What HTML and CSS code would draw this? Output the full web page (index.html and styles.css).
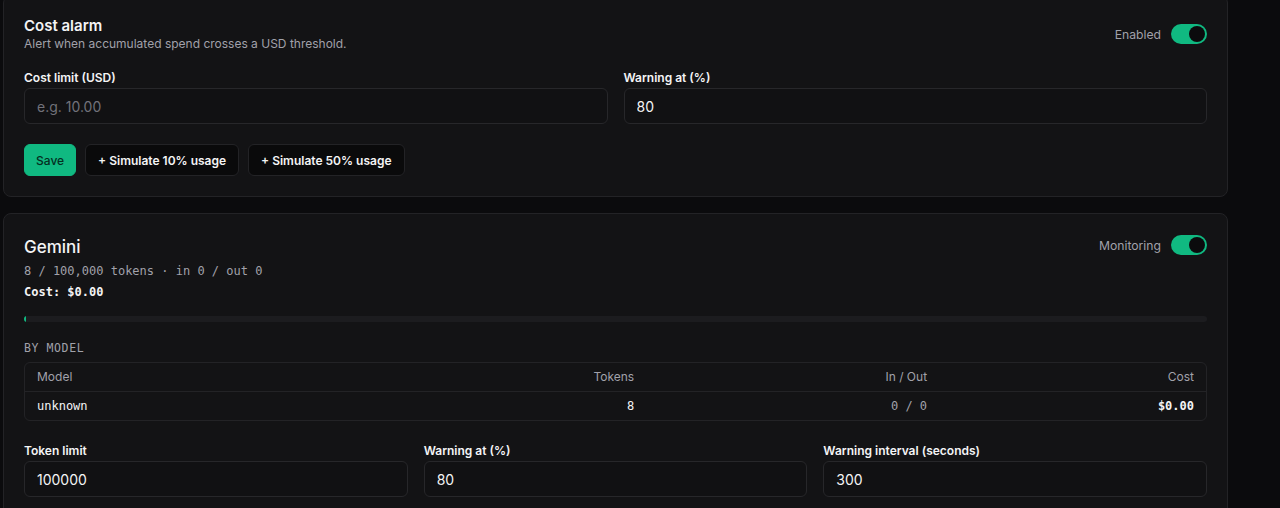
FILE: index.html
```html
<!DOCTYPE html>
<html lang="en">
<head>
    <meta charset="UTF-8">
    <meta name="viewport" content="width=device-width, initial-scale=1.0">
    <title>Usage limits</title>
    <link rel="stylesheet" href="styles.css">
</head>
<body>

    <div class="page">

        <!-- Cost alarm card -->
        <section class="card">
            <div class="card-head">
                <div>
                    <h2 class="card-title">Cost alarm</h2>
                    <p class="card-sub">Alert when accumulated spend crosses a USD threshold.</p>
                </div>
                <label class="switch-wrap">
                    <span>Enabled</span>
                    <span class="switch on"><span class="knob"></span></span>
                </label>
            </div>

            <div class="fields two">
                <div class="field">
                    <label>Cost limit (USD)</label>
                    <input type="text" placeholder="e.g. 10.00">
                </div>
                <div class="field">
                    <label>Warning at (%)</label>
                    <input type="text" value="80">
                </div>
            </div>

            <div class="actions">
                <button class="btn primary">Save</button>
                <button class="btn">+ Simulate 10% usage</button>
                <button class="btn">+ Simulate 50% usage</button>
            </div>
        </section>

        <!-- Provider card -->
        <section class="card">
            <div class="card-head top">
                <div>
                    <h2 class="provider">Gemini</h2>
                    <div class="mono muted">8 / 100,000 tokens · in 0 / out 0</div>
                    <div class="mono strong">Cost: <b>$0.00</b></div>
                </div>
                <label class="switch-wrap">
                    <span>Monitoring</span>
                    <span class="switch on"><span class="knob"></span></span>
                </label>
            </div>

            <div class="bar"><div class="bar-fill" style="width: 0.008%"></div></div>

            <div class="section-label">BY MODEL</div>
            <table class="models">
                <colgroup>
                    <col style="width: 27.2%">
                    <col style="width: 25.4%">
                    <col style="width: 24.8%">
                    <col style="width: 22.6%">
                </colgroup>
                <thead>
                    <tr>
                        <th>Model</th>
                        <th class="num">Tokens</th>
                        <th class="num">In / Out</th>
                        <th class="num">Cost</th>
                    </tr>
                </thead>
                <tbody>
                    <tr>
                        <td class="mono">unknown</td>
                        <td class="num mono">8</td>
                        <td class="num mono muted">0 / 0</td>
                        <td class="num mono"><b>$0.00</b></td>
                    </tr>
                </tbody>
            </table>

            <div class="fields three">
                <div class="field">
                    <label>Token limit</label>
                    <input type="text" value="100000">
                </div>
                <div class="field">
                    <label>Warning at (%)</label>
                    <input type="text" value="80">
                </div>
                <div class="field">
                    <label>Warning interval (seconds)</label>
                    <input type="text" value="300">
                </div>
            </div>
        </section>

    </div>

</body>
</html>
```

FILE: styles.css
```css
body {
    margin: 0;
    background-color: #0b0b0d;
    color: #f4f4f5;
    font-family: Inter, "Noto Sans", sans-serif;
    overflow: hidden;
}

.page {
    width: 1225px;
    padding-left: 3px;
    margin-top: -5px;
    display: flex;
    flex-direction: column;
    gap: 16px;
}

.card {
    background-color: #131315;
    border: 1px solid #232326;
    border-radius: 8px;
    padding: 20px;
}

.card-head {
    display: flex;
    justify-content: space-between;
    align-items: center;
}

.card-head.top {
    align-items: flex-start;
}

.card-head.top .switch-wrap {
    margin-top: 1px;
}

.card-title {
    margin: 0;
    font-size: 15px;
    line-height: 20px;
    font-weight: 600;
}

.card-sub {
    margin: 0;
    font-size: 12px;
    line-height: 16px;
    color: #a1a1aa;
}

.provider {
    margin: 0;
    padding-top: 1px;
    font-size: 17px;
    line-height: 24px;
    font-weight: 500;
}

.switch-wrap {
    display: flex;
    align-items: center;
    gap: 10px;
    font-size: 12.2px;
    color: #a1a1aa;
}

.switch {
    width: 36px;
    height: 20px;
    border-radius: 10px;
    background-color: #3f3f46;
    position: relative;
}

.switch.on {
    background-color: #10b981;
}

.switch .knob {
    position: absolute;
    top: 2px;
    left: 2px;
    width: 16px;
    height: 16px;
    border-radius: 50%;
    background-color: #0b0b0d;
}

.switch.on .knob {
    left: 18px;
}

.fields {
    display: grid;
    gap: 16px;
}

.fields.two {
    grid-template-columns: 1fr 1fr;
    margin-top: 18px;
}

.fields.three {
    grid-template-columns: 1fr 1fr 1fr;
    margin-top: 22px;
}

.field label {
    display: block;
    font-size: 12px;
    line-height: 16px;
    font-weight: 600;
    margin-bottom: 2px;
}

.field input {
    box-sizing: border-box;
    width: 100%;
    height: 36px;
    padding: 0 12px;
    background-color: #111113;
    border: 1px solid #27272a;
    border-radius: 6px;
    color: #f4f4f5;
    font-family: Inter, sans-serif;
    font-size: 14px;
    outline: none;
}

.field input::placeholder {
    color: #71717a;
}

.actions {
    display: flex;
    gap: 9px;
    margin-top: 20px;
}

.btn {
    height: 32px;
    padding: 0 12px;
    background-color: #0a0a0b;
    border: 1px solid #232326;
    border-radius: 6px;
    color: #f4f4f5;
    font-family: Inter, sans-serif;
    font-size: 12px;
    font-weight: 600;
    cursor: pointer;
}

.btn.primary {
    padding: 0 11px;
    background-color: #10b981;
    border-color: #10b981;
    color: #052e1f;
    font-weight: 500;
}

.mono {
    font-family: "DejaVu Sans Mono", "Liberation Mono", monospace;
    font-size: 12px;
}

.card-head .mono {
    line-height: 20px;
}

.card-head .mono.muted {
    margin-top: 2px;
}

.card-head .mono.strong {
    margin-top: 1px;
}

.muted {
    color: #a1a1aa;
}

.strong {
    color: #f4f4f5;
    font-weight: 600;
}

.bar {
    margin-top: 14px;
    height: 6px;
    border-radius: 3px;
    background-color: #1c1c1f;
    overflow: hidden;
}

.bar-fill {
    height: 100%;
    min-width: 2px;
    background-color: #10b981;
}

.section-label {
    margin-top: 18px;
    font-family: "DejaVu Sans Mono", monospace;
    font-size: 11.5px;
    line-height: 16px;
    letter-spacing: 0.6px;
    color: #a1a1aa;
}

.models {
    width: 100%;
    margin-top: 6px;
    border: 1px solid #232326;
    border-radius: 6px;
    border-collapse: separate;
    border-spacing: 0;
    table-layout: fixed;
}

.models th {
    padding: 7px 12px;
    line-height: 14px;
    text-align: left;
    font-size: 12px;
    font-weight: 400;
    color: #a1a1aa;
    border-bottom: 1px solid #232326;
}

.models td {
    padding: 7px 12px;
    line-height: 14px;
    color: #f4f4f5;
}

.models td.muted {
    color: #a1a1aa;
}

.models .num {
    text-align: right;
}
```
